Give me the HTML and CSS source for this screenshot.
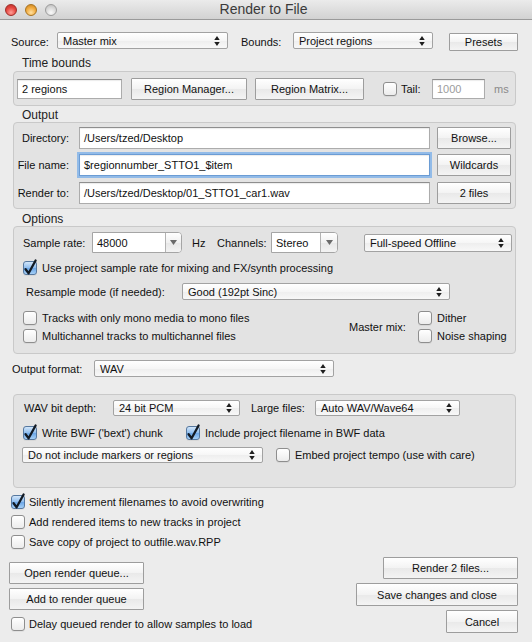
FILE: index.html
```html
<!DOCTYPE html>
<html lang="en">
<head>
    <meta charset="UTF-8">
    <title>Render to File</title>
    <link rel="stylesheet" href="styles.css">
</head>
<body>
    <div class="titlebar">
        <div class="lights">
            <span class="light red"></span>
            <span class="light yellow"></span>
            <span class="light gray"></span>
        </div>
        <div class="title">Render to File</div>
    </div>

    <div class="top-row">
        <span class="source-lbl">Source:</span>
        <div class="select source-sel">Master mix<svg class="updown" viewBox="0 0 6 11"><path d="M3 0L6 4.3H0zM0 6.7h6L3 11z"/></svg></div>
        <span class="bounds-lbl">Bounds:</span>
        <div class="select bounds-sel">Project regions<svg class="updown" viewBox="0 0 6 11"><path d="M3 0L6 4.3H0zM0 6.7h6L3 11z"/></svg></div>
        <div class="btn presets-btn">Presets</div>
    </div>

    <!-- Time bounds -->
    <div class="group-label time-label">Time bounds</div>
    <div class="group time-group">
        <div class="field regions-field">2 regions</div>
        <div class="btn rm-btn">Region Manager...</div>
        <div class="btn rx-btn">Region Matrix...</div>
        <span class="cb tail-cb"></span>
        <span class="tail-lbl">Tail:</span>
        <div class="field tail-field">1000</div>
        <span class="ms">ms</span>
    </div>

    <!-- Output -->
    <div class="group-label out-label">Output</div>
    <div class="group out-group">
        <div class="out-row">
            <span class="out-lbl">Directory:</span>
            <div class="field out-field">/Users/tzed/Desktop</div>
            <div class="btn out-btn">Browse...</div>
        </div>
        <div class="out-row mt5">
            <span class="out-lbl">File name:</span>
            <div class="field out-field focus">$regionnumber_STTO1_$item</div>
            <div class="btn out-btn">Wildcards</div>
        </div>
        <div class="out-row mt6">
            <span class="out-lbl">Render to:</span>
            <div class="field out-field">/Users/tzed/Desktop/01_STTO1_car1.wav</div>
            <div class="btn out-btn">2 files</div>
        </div>
    </div>

    <!-- Options -->
    <div class="group-label opt-label">Options</div>
    <div class="group opt-group">
        <div class="rate-row">
            <span class="rate-lbl">Sample rate:</span>
            <div class="combo rate-combo">
                <span class="combo-text">48000</span>
                <span class="combo-btn"><svg class="down" viewBox="0 0 7 5"><path d="M0 0h7L3.5 5z"/></svg></span>
            </div>
            <span class="hz">Hz</span>
            <span class="ch-lbl">Channels:</span>
            <div class="combo ch-combo">
                <span class="combo-text">Stereo</span>
                <span class="combo-btn"><svg class="down" viewBox="0 0 7 5"><path d="M0 0h7L3.5 5z"/></svg></span>
            </div>
            <div class="select speed-sel">Full-speed Offline<svg class="updown" viewBox="0 0 6 11"><path d="M3 0L6 4.3H0zM0 6.7h6L3 11z"/></svg></div>
        </div>
        <div class="check-row project-rate">
            <span class="cb on"><svg class="tick" viewBox="0 0 14 14"><path d="M2.6 7.2L5.6 11.3L12.6 -1.5"/></svg></span>
            Use project sample rate for mixing and FX/synth processing
        </div>
        <div class="resample-row">
            <span class="resample-lbl">Resample mode (if needed):</span>
            <div class="select resample-sel">Good (192pt Sinc)<svg class="updown" viewBox="0 0 6 11"><path d="M3 0L6 4.3H0zM0 6.7h6L3 11z"/></svg></div>
        </div>
        <div class="mix-row">
            <div class="mix-left">
                <div class="mix-line"><span class="cb"></span>Tracks with only mono media to mono files</div>
                <div class="mix-line"><span class="cb"></span>Multichannel tracks to multichannel files</div>
            </div>
            <span class="master-lbl">Master mix:</span>
            <div class="mix-right">
                <div class="mix-line"><span class="cb"></span>Dither</div>
                <div class="mix-line"><span class="cb"></span>Noise shaping</div>
            </div>
        </div>
    </div>

    <div class="format-row">
        <span class="format-lbl">Output format:</span>
        <div class="select format-sel">WAV<svg class="updown" viewBox="0 0 6 11"><path d="M3 0L6 4.3H0zM0 6.7h6L3 11z"/></svg></div>
    </div>

    <!-- WAV settings -->
    <div class="group wav-group">
        <div class="wav-row">
            <span class="depth-lbl">WAV bit depth:</span>
            <div class="select depth-sel">24 bit PCM<svg class="updown" viewBox="0 0 6 11"><path d="M3 0L6 4.3H0zM0 6.7h6L3 11z"/></svg></div>
            <span class="large-lbl">Large files:</span>
            <div class="select large-sel">Auto WAV/Wave64<svg class="updown" viewBox="0 0 6 11"><path d="M3 0L6 4.3H0zM0 6.7h6L3 11z"/></svg></div>
        </div>
        <div class="bwf-row">
            <div class="bwf-left">
                <span class="cb on"><svg class="tick" viewBox="0 0 14 14"><path d="M2.6 7.2L5.6 11.3L12.6 -1.5"/></svg></span>Write BWF ('bext') chunk
            </div>
            <span class="cb on"><svg class="tick" viewBox="0 0 14 14"><path d="M2.6 7.2L5.6 11.3L12.6 -1.5"/></svg></span>Include project filename in BWF data
        </div>
        <div class="marker-row">
            <div class="select marker-sel">Do not include markers or regions<svg class="updown" viewBox="0 0 6 11"><path d="M3 0L6 4.3H0zM0 6.7h6L3 11z"/></svg></div>
            <span class="cb tempo-cb"></span>Embed project tempo (use with care)
        </div>
    </div>

    <div class="extra-list">
        <div class="extra-line"><span class="cb on"><svg class="tick" viewBox="0 0 14 14"><path d="M2.6 7.2L5.6 11.3L12.6 -1.5"/></svg></span>Silently increment filenames to avoid overwriting</div>
        <div class="extra-line"><span class="cb"></span>Add rendered items to new tracks in project</div>
        <div class="extra-line"><span class="cb"></span>Save copy of project to outfile.wav.RPP</div>
    </div>

    <div class="bottom">
        <div class="bottom-left">
            <div class="btn queue-btn">Open render queue...</div>
            <div class="btn queue-btn">Add to render queue</div>
            <div class="delay-line"><span class="cb"></span>Delay queued render to allow samples to load</div>
        </div>
        <div class="bottom-right">
            <div class="btn render-btn">Render 2 files...</div>
            <div class="btn save-btn">Save changes and close</div>
            <div class="btn cancel-btn">Cancel</div>
        </div>
    </div>
</body>
</html>
```

FILE: styles.css
```css
* {
    box-sizing: border-box;
}

body {
    margin: 0;
    width: 532px;
    height: 642px;
    overflow: hidden;
    background-color: #ececec;
    font-family: "Liberation Sans", Arial, sans-serif;
    font-size: 11px;
    color: #111;
}

/* Title bar */
.titlebar {
    display: grid;
    height: 20px;
    background: linear-gradient(#ebebeb, #d2d2d2);
    border-bottom: 1px solid #9a9a9a;
}

.titlebar > * {
    grid-area: 1 / 1;
}

.lights {
    display: flex;
    align-items: center;
    gap: 8px;
    padding-left: 5px;
}

.light {
    width: 12px;
    height: 12px;
    border-radius: 50%;
}

.light.red {
    background: radial-gradient(circle at 50% 75%, #ff9d96, #e5463f 55%, #b9302a);
    border: 1px solid #9e2c27;
}

.light.yellow {
    background: radial-gradient(circle at 50% 75%, #ffe0a0, #f0a93d 55%, #c5801f);
    border: 1px solid #a8731f;
}

.light.gray {
    background: radial-gradient(circle at 50% 75%, #fafafa, #d8d8d8 55%, #b9b9b9);
    border: 1px solid #9c9c9c;
}

.title {
    text-align: center;
    line-height: 19px;
    font-size: 14px;
    color: #3a3a3a;
    padding-right: 5px;
}

/* Common controls */
.btn {
    display: flex;
    align-items: center;
    justify-content: center;
    background: linear-gradient(#ffffff, #f3f3f3 50%, #e9e9e9 51%, #f4f4f4);
    border: 1px solid #9d9d9d;
    border-radius: 1px;
    color: #111;
}

.select {
    display: flex;
    align-items: center;
    justify-content: space-between;
    padding: 0 7px 0 5px;
    background: linear-gradient(#ffffff, #f6f6f6 50%, #eeeeee 51%, #f8f8f8);
    border: 1px solid #a2a2a2;
    border-radius: 2px;
}

.updown {
    width: 6px;
    height: 10px;
    flex: none;
    fill: #1e1e1e;
}

.field {
    display: flex;
    align-items: center;
    padding-left: 4px;
    background: #fff;
    border: 1px solid #acacac;
    border-top-color: #8e8e8e;
    box-shadow: inset 0 1px 1px rgba(0, 0, 0, 0.08);
    white-space: nowrap;
    overflow: hidden;
}

.field.focus {
    border-color: #6b9cd4;
    box-shadow: 0 0 0 2px #92bbe8, inset 0 1px 1px rgba(0, 0, 0, 0.08);
}

.combo {
    display: flex;
    background: #fff;
    border: 1px solid #a5a5a5;
    border-radius: 0 4px 4px 0;
}

.combo-text {
    flex: 1;
    display: flex;
    align-items: center;
    padding-left: 4px;
}

.combo-btn {
    display: flex;
    align-items: center;
    justify-content: center;
    border-left: 1px solid #b3b3b3;
    border-radius: 0 3px 3px 0;
    background: linear-gradient(#ffffff, #f1f1f1 50%, #e7e7e7 51%, #f3f3f3);
}

.down {
    width: 7px;
    height: 5px;
    fill: #6a6a6a;
}

.cb {
    display: inline-flex;
    flex: none;
    width: 14px;
    height: 14px;
    margin-right: 5px;
    border: 1px solid #8e8e8e;
    border-radius: 3px;
    background: linear-gradient(#ffffff, #ececec);
    box-shadow: 0 1px 0 rgba(0, 0, 0, 0.05);
}

.cb.on {
    background: linear-gradient(#d2e6fa, #8dbcee 50%, #6aa5e6 51%, #a6d0f7);
    border-color: #56789f;
}

.tick {
    width: 14px;
    height: 14px;
    margin-left: -1px;
    overflow: visible;
    fill: none;
    stroke: #121a24;
    stroke-width: 2.3;
    stroke-linecap: round;
    stroke-linejoin: round;
}

.group {
    margin-left: 13px;
    width: 503px;
    background: #e3e3e3;
    border: 1px solid #c9c9c9;
    border-radius: 4px;
}

.group-label {
    height: 14px;
    line-height: 14px;
    padding-left: 22px;
    font-size: 12px;
    color: #222;
}

/* Top row */
.top-row {
    display: flex;
    align-items: center;
    height: 19px;
    margin-top: 12px;
    padding-left: 11px;
}

.source-lbl {
    width: 46px;
}

.source-sel {
    width: 171px;
    height: 17px;
    margin-bottom: 2px;
}

.bounds-lbl {
    width: 52px;
    margin-left: 13px;
}

.bounds-sel {
    width: 140px;
    height: 17px;
    margin-bottom: 2px;
}

.presets-btn {
    width: 69px;
    height: 18px;
    margin-left: 16px;
}

/* Time bounds */
.time-label {
    margin-top: 5px;
}

.time-group {
    display: flex;
    align-items: center;
    height: 35px;
    margin-top: 1px;
    padding-left: 3px;
}

.regions-field {
    width: 105px;
    height: 20px;
}

.rm-btn {
    width: 116px;
    height: 22px;
    margin-left: 9px;
}

.rx-btn {
    width: 109px;
    height: 22px;
    margin-left: 8px;
}

.tail-cb {
    margin-left: 19px;
    margin-right: 0;
}

.tail-lbl {
    width: 31px;
    margin-left: 4px;
}

.tail-field {
    width: 53px;
    height: 20px;
    color: #9c9c9c;
}

.ms {
    margin-left: 9px;
    color: #8a8a8a;
}

/* Output */
.out-label {
    margin-top: 2px;
}

.out-group {
    height: 87px;
    padding-top: 4px;
}

.out-row {
    display: flex;
    align-items: center;
    height: 22px;
}

.mt5 {
    margin-top: 5px;
}

.mt6 {
    margin-top: 6px;
}

.out-lbl {
    width: 55px;
    text-align: right;
}

.out-field {
    width: 351px;
    height: 22px;
    margin-left: 10px;
}

.out-btn {
    width: 74px;
    height: 22px;
    margin-left: 7px;
}

/* Options */
.opt-label {
    margin-top: 3px;
}

.opt-group {
    height: 128px;
    padding: 5px 0 0 9px;
}

.rate-row {
    display: flex;
    align-items: center;
    height: 21px;
}

.rate-lbl {
    width: 69px;
}

.rate-combo {
    width: 90px;
    height: 21px;
}

.rate-combo .combo-btn {
    width: 16px;
}

.hz {
    width: 25px;
    margin-left: 10px;
}

.ch-lbl {
    width: 54px;
}

.ch-combo {
    width: 67px;
    height: 21px;
}

.ch-combo .combo-btn {
    width: 17px;
}

.speed-sel {
    width: 148px;
    height: 18px;
    margin-left: 26px;
}

.check-row {
    display: flex;
    align-items: center;
    height: 15px;
}

.project-rate {
    margin-top: 7px;
}

.resample-row {
    display: flex;
    align-items: center;
    height: 17px;
    margin-top: 8px;
}

.resample-lbl {
    width: 156px;
    margin-left: 3px;
}

.resample-sel {
    width: 268px;
    height: 17px;
}

.mix-row {
    display: flex;
    align-items: center;
    margin-top: 9px;
}

.mix-left {
    width: 326px;
}

.mix-line {
    display: flex;
    align-items: center;
    height: 18px;
}

.master-lbl {
    width: 69px;
}

/* Output format */
.format-row {
    display: flex;
    align-items: center;
    height: 17px;
    margin-top: 6px;
    padding-left: 12px;
}

.format-lbl {
    width: 82px;
}

.format-sel {
    width: 240px;
    height: 17px;
}

/* WAV */
.wav-group {
    height: 94px;
    margin-top: 17px;
    padding: 4px 0 0 10px;
}

.wav-row {
    display: flex;
    align-items: center;
    height: 17px;
}

.depth-lbl {
    width: 89px;
}

.depth-sel {
    width: 127px;
    height: 16px;
}

.large-lbl {
    width: 64px;
    margin-left: 11px;
}

.large-sel {
    width: 145px;
    height: 16px;
}

.bwf-row {
    display: flex;
    align-items: center;
    height: 15px;
    margin-top: 9px;
    margin-left: -1px;
}

.bwf-left {
    display: flex;
    align-items: center;
    width: 163px;
}

.marker-row {
    display: flex;
    align-items: center;
    height: 16px;
    margin-top: 7px;
    margin-left: -2px;
}

.marker-sel {
    width: 241px;
    height: 16px;
}

.tempo-cb {
    margin-left: 13px;
}

/* Bottom */
.extra-list {
    margin-top: 4px;
    padding-left: 11px;
}

.extra-line {
    display: flex;
    align-items: center;
    height: 20px;
}

.extra-line .cb {
    margin-right: 4px;
}

.bottom {
    display: flex;
    justify-content: space-between;
}

.bottom-left {
    display: flex;
    flex-direction: column;
    gap: 4px;
    margin-left: 9px;
    padding-top: 10px;
}

.queue-btn {
    width: 135px;
    height: 22px;
}

.delay-line {
    display: flex;
    align-items: center;
    height: 16px;
    margin-top: 2px;
    margin-left: 2px;
}

.delay-line .cb {
    margin-right: 4px;
}

.bottom-right {
    display: flex;
    flex-direction: column;
    align-items: flex-end;
    gap: 4px;
    margin-right: 14px;
    padding-top: 5px;
}

.render-btn {
    width: 135px;
    height: 22px;
}

.save-btn {
    width: 162px;
    height: 23px;
}

.cancel-btn {
    width: 72px;
    height: 23px;
}
```
